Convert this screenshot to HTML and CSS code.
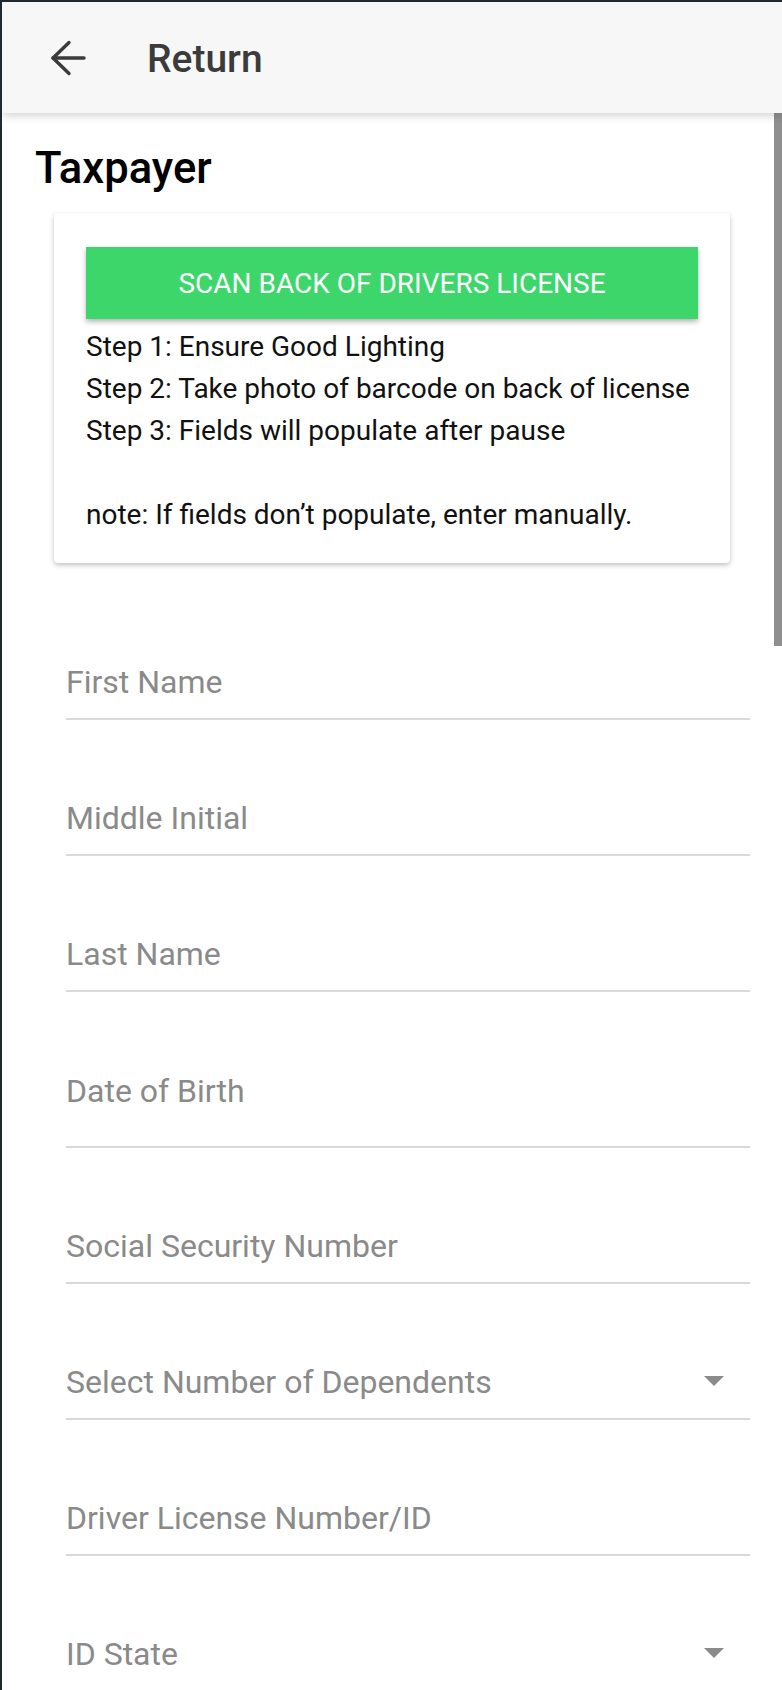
FILE: index.html
```html
<!DOCTYPE html>
<html lang="en">
<head>
<meta charset="utf-8">
<title>Return</title>
<link rel="stylesheet" href="styles.css">
</head>
<body>
<div class="app">
  <header class="topbar">
    <button class="back" aria-label="Back">
      <svg width="36" height="36" viewBox="0 0 36 36" fill="none" stroke="#3b3b3b" stroke-width="3.4" stroke-linecap="round" stroke-linejoin="round">
        <path d="M3 18 H34"/>
        <path d="M19 2.5 L3 18 L19 33.5"/>
      </svg>
    </button>
    <div class="title">Return</div>
  </header>
  <div class="body-row">
    <main class="content">
      <h1 class="heading">Taxpayer</h1>
      <section class="card">
        <button class="scan-btn">SCAN BACK OF DRIVERS LICENSE</button>
        <div class="steps">
          <div>Step 1: Ensure Good Lighting</div>
          <div>Step 2: Take photo of barcode on back of license</div>
          <div>Step 3: Fields will populate after pause</div>
          <div>&nbsp;</div>
          <div>note: If fields don’t populate, enter manually.</div>
        </div>
      </section>
      <div class="fields">
        <div class="field"><span class="label">First Name</span></div>
        <div class="field"><span class="label">Middle Initial</span></div>
        <div class="field"><span class="label">Last Name</span></div>
        <div class="field field-date"><span class="label">Date of Birth</span></div>
        <div class="field"><span class="label">Social Security Number</span></div>
        <div class="field field-select"><span class="label">Select Number of Dependents</span><span class="caret"></span></div>
        <div class="field"><span class="label">Driver License Number/ID</span></div>
        <div class="field field-select"><span class="label">ID State</span><span class="caret"></span></div>
      </div>
    </main>
    <div class="scrolltrack"><div class="thumb"></div></div>
  </div>
</div>
</body>
</html>
```

FILE: styles.css
```css
* { box-sizing: border-box; }

html, body {
  margin: 0;
  height: 1690px;
  overflow: hidden;
}

body {
  background: #1f292f;
  padding: 2px 0 0 2px;
  font-family: Roboto, "Liberation Sans", Arial, sans-serif;
}

.app {
  background: #ffffff;
  height: 1688px;
  display: flex;
  flex-direction: column;
  overflow: hidden;
}

.topbar {
  flex: 0 0 111px;
  height: 111px;
  background: #f7f7f7;
  display: flex;
  align-items: center;
  padding-left: 48px;
  position: relative;
  z-index: 2;
  box-shadow: 0 2px 9px rgba(0, 0, 0, 0.2);
}

.back {
  border: 0;
  background: none;
  padding: 0;
  width: 36px;
  height: 36px;
  display: flex;
  align-items: center;
  justify-content: center;
}

.title {
  margin-left: 61px;
  font-size: 39px;
  font-weight: 500;
  color: #3b3b3b;
  line-height: 46px;
  margin-top: 2px;
}

.body-row {
  flex: 1;
  display: flex;
  min-height: 0;
}

.content {
  flex: 1;
  padding-top: 30px;
}

.scrolltrack {
  flex: 0 0 8px;
  width: 8px;
}

.thumb {
  height: 533px;
  background: #8f8f8f;
}

.heading {
  margin: 0 0 0 33px;
  font-size: 43.6px;
  font-weight: 500;
  line-height: 52px;
  color: #000;
}

.card {
  margin: 18px 44px 0 52px;
  padding: 34px 32px 27px 32px;
  background: #fff;
  border-radius: 4px;
  box-shadow: 0 2px 5px rgba(0, 0, 0, 0.25);
}

.scan-btn {
  display: block;
  width: 100%;
  height: 72px;
  border: 0;
  background: #3dd66b;
  color: #fff;
  font-family: Roboto, "Liberation Sans", Arial, sans-serif;
  font-size: 28px;
  font-weight: 400;
  box-shadow: 0 3px 5px rgba(0, 0, 0, 0.28);
  margin-bottom: 7px;
}

.steps {
  font-size: 28px;
  line-height: 42px;
  color: #111;
}

.fields {
  margin: 21px 24px 0 64px;
}

.field {
  display: flex;
  align-items: center;
  padding: 78px 26px 16px 0;
  border-bottom: 2px solid #d9d9d9;
}

.field-date {
  padding-top: 79px;
  padding-bottom: 35px;
}

.label {
  flex: 1;
  font-size: 32px;
  line-height: 40px;
  color: #8a8a8a;
}

.caret {
  width: 0;
  height: 0;
  border-left: 10px solid transparent;
  border-right: 10px solid transparent;
  border-top: 10px solid #8a8a8a;
  margin-top: -2px;
}
```
